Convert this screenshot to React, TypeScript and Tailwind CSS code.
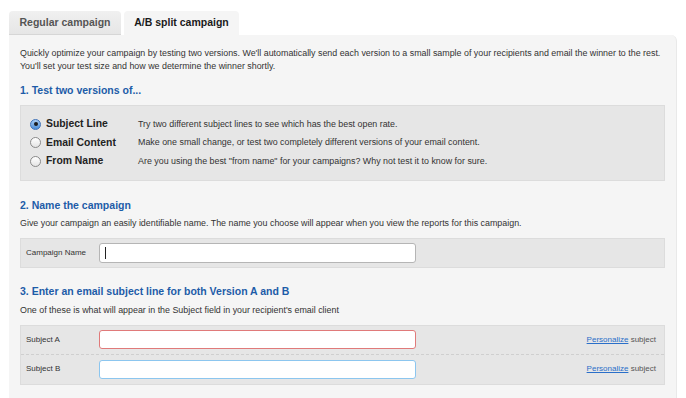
import React from "react";

const OPTIONS = [
  {
    label: "Subject Line",
    desc: "Try two different subject lines to see which has the best open rate.",
    checked: true,
  },
  {
    label: "Email Content",
    desc: "Make one small change, or test two completely different versions of your email content.",
    checked: false,
  },
  {
    label: "From Name",
    desc: 'Are you using the best "from name" for your campaigns? Why not test it to know for sure.',
    checked: false,
  },
];

function Radio({ checked }: { checked: boolean }) {
  return checked ? (
    <span className="flex h-[11px] w-[11px] items-center justify-center rounded-full border border-[#3f72b8] bg-gradient-to-b from-[#a9cdf2] to-[#4d8fd8]">
      <span className="h-[4px] w-[4px] rounded-full bg-[#1b1b1b]" />
    </span>
  ) : (
    <span className="h-[11px] w-[11px] rounded-full border border-[#8a8a8a] bg-gradient-to-b from-white to-[#e4e4e4]" />
  );
}

function Heading({ children }: { children: React.ReactNode }) {
  return (
    <h2 className="text-[10.5px] font-bold leading-[14px] text-[#1d5ca8]">
      {children}
    </h2>
  );
}

function SubjectRow({
  label,
  inputClass,
  last,
}: {
  label: string;
  inputClass: string;
  last?: boolean;
}) {
  return (
    <div
      className={`flex h-[29px] items-center pl-[5px] pr-[8px] ${
        last ? "" : "border-b border-dashed border-[#cfcfcf]"
      }`}
    >
      <span className="w-[73px] text-[8px] text-[#333]">{label}</span>
      <div className={inputClass} />
      <span className="ml-auto text-[8px] text-[#555]">
        <a className="text-[#2a6fc9] underline">Personalize</a> subject
      </span>
    </div>
  );
}

export default function App() {
  return (
    <div className="h-[398px] overflow-hidden bg-white pl-[9px] pr-[9px] pt-[11px] font-['Liberation_Sans',Arial,sans-serif] text-[#333]">
      {/* tabs */}
      <div className="flex gap-[3px]">
        <div className="flex h-[24px] w-[112px] items-center justify-center rounded-t-[4px] border-b border-[#d6d6d6] bg-gradient-to-b from-[#f0f0f0] to-[#e6e6e6] text-[10.5px] font-bold text-[#555]">
          Regular campaign
        </div>
        <div className="flex h-[24px] w-[115px] items-center justify-center rounded-t-[4px] bg-[#f5f5f5] text-[10.5px] font-bold text-[#1a1a1a]">
          A/B split campaign
        </div>
      </div>

      {/* panel */}
      <div className="h-[400px] rounded-tr-[6px] border-r border-[#e9e9e9] bg-[#f5f5f5] px-[11px] pt-[12px]">
        <p className="text-[8.9px] leading-[13px]">
          <span className="whitespace-nowrap">
            Quickly optimize your campaign by testing two versions. We'll
            automatically send each version to a small sample of your
            recipients and email the winner to the rest.
          </span>
          <br />
          You'll set your test size and how we determine the winner shortly.
        </p>

        <div className="mt-[10px]">
          <Heading>1. Test two versions of...</Heading>
        </div>
        <div className="mt-[8px] border border-[#dcdcdc] bg-[#e6e6e6] pb-[9px] pl-[9px] pt-[9px]">
          {OPTIONS.map((o) => (
            <div key={o.label} className="flex h-[18.5px] items-center">
              <Radio checked={o.checked} />
              <span className="ml-[5px] w-[92px] text-[10.4px] font-bold text-[#222]">
                {o.label}
              </span>
              <span className="text-[8.9px] text-[#333]">{o.desc}</span>
            </div>
          ))}
        </div>

        <div className="mt-[17px]">
          <Heading>2. Name the campaign</Heading>
        </div>
        <p className="mt-[5px] text-[8.9px] leading-[13px]">
          Give your campaign an easily identifiable name. The name you choose
          will appear when you view the reports for this campaign.
        </p>
        <div className="mt-[8px] flex h-[30px] items-center border border-[#dcdcdc] bg-[#e6e6e6] pl-[5px]">
          <span className="w-[73px] text-[8px] text-[#333]">Campaign Name</span>
          <div className="flex h-[20px] w-[317px] items-center rounded-[3px] border border-[#b5b5b5] bg-white pl-[5px]">
            <span className="h-[12px] w-px bg-[#222]" />
          </div>
        </div>

        <div className="mt-[16px]">
          <Heading>3. Enter an email subject line for both Version A and B</Heading>
        </div>
        <p className="mt-[6px] text-[8.9px] leading-[13px]">
          One of these is what will appear in the Subject field in your
          recipient's email client
        </p>
        <div className="mt-[8px] border border-[#dcdcdc] bg-[#e6e6e6]">
          <SubjectRow
            label="Subject A"
            inputClass="h-[19px] w-[317px] rounded-[3px] border border-[#e07a7a] bg-white"
          />
          <SubjectRow
            label="Subject B"
            inputClass="h-[19px] w-[317px] rounded-[3px] border border-[#8cc6ef] bg-white"
            last
          />
        </div>
      </div>
    </div>
  );
}
